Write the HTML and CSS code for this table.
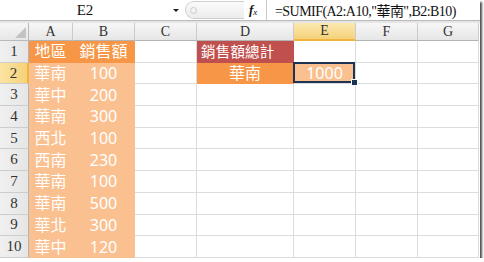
FILE: index.html
```html
<!DOCTYPE html>
<html lang="zh-Hant">
<head>
  <meta charset="UTF-8">
  <title>SUMIF</title>
  <link rel="stylesheet" href="styles.css">
</head>
<body>

  <div class="window">
    <!-- name box + formula bar -->
    <div class="formula-bar">
      <div class="name-box">E2</div>
      <span class="drop"></span>
      <span class="grip"><i></i></span>
      <span class="fx"><i>f</i><sub>x</sub></span>
      <div class="formula">=SUMIF(A2:A10,"華南",B2:B10)</div>
    </div>
    <div class="strip"></div>

    <div class="sheet">
      <div class="row head">
        <div class="corner"></div>
        <div class="col-h">A</div><div class="col-h">B</div><div class="col-h">C</div>
        <div class="col-h">D</div><div class="col-h active">E</div><div class="col-h">F</div><div class="col-h">G</div>
      </div>

      <div class="row">
        <div class="row-h">1</div>
        <div class="cell title">地區</div><div class="cell title">銷售額</div><div class="cell"></div>
        <div class="cell total">銷售額總計</div><div class="cell"></div><div class="cell"></div><div class="cell"></div>
      </div>
      <div class="row">
        <div class="row-h active">2</div>
        <div class="cell data">華南</div><div class="cell data">100</div><div class="cell"></div>
        <div class="cell title">華南</div><div class="cell data sel">1000</div><div class="cell"></div><div class="cell"></div>
      </div>
      <div class="row">
        <div class="row-h">3</div>
        <div class="cell data">華中</div><div class="cell data">200</div><div class="cell"></div>
        <div class="cell"></div><div class="cell"></div><div class="cell"></div><div class="cell"></div>
      </div>
      <div class="row">
        <div class="row-h">4</div>
        <div class="cell data">華南</div><div class="cell data">300</div><div class="cell"></div>
        <div class="cell"></div><div class="cell"></div><div class="cell"></div><div class="cell"></div>
      </div>
      <div class="row">
        <div class="row-h">5</div>
        <div class="cell data">西北</div><div class="cell data">100</div><div class="cell"></div>
        <div class="cell"></div><div class="cell"></div><div class="cell"></div><div class="cell"></div>
      </div>
      <div class="row">
        <div class="row-h">6</div>
        <div class="cell data">西南</div><div class="cell data">230</div><div class="cell"></div>
        <div class="cell"></div><div class="cell"></div><div class="cell"></div><div class="cell"></div>
      </div>
      <div class="row">
        <div class="row-h">7</div>
        <div class="cell data">華南</div><div class="cell data">100</div><div class="cell"></div>
        <div class="cell"></div><div class="cell"></div><div class="cell"></div><div class="cell"></div>
      </div>
      <div class="row">
        <div class="row-h">8</div>
        <div class="cell data">華南</div><div class="cell data">500</div><div class="cell"></div>
        <div class="cell"></div><div class="cell"></div><div class="cell"></div><div class="cell"></div>
      </div>
      <div class="row">
        <div class="row-h">9</div>
        <div class="cell data">華北</div><div class="cell data">300</div><div class="cell"></div>
        <div class="cell"></div><div class="cell"></div><div class="cell"></div><div class="cell"></div>
      </div>
      <div class="row">
        <div class="row-h">10</div>
        <div class="cell data">華中</div><div class="cell data">120</div><div class="cell"></div>
        <div class="cell"></div><div class="cell"></div><div class="cell"></div><div class="cell"></div>
      </div>
    </div>
  </div>

</body>
</html>
```

FILE: styles.css
```css
body {
  margin: 0;
  background: #fff;
}
.window {
  width: 480px;
  height: 258px;
  overflow: hidden;
  background: #fff;
  box-shadow: 2px 2px 2px rgba(0, 0, 0, 0.7);
}

/* formula bar */
.formula-bar {
  display: flex;
  align-items: center;
  height: 20px;
  border-bottom: 1px solid #b9b9b9;
  font-family: "Liberation Serif", "Noto Sans CJK TC", serif;
  color: #111;
}
.name-box {
  width: 170px;
  text-align: center;
  font-size: 15px;
}
.drop {
  width: 0;
  height: 0;
  margin-left: 3px;
  border-left: 3px solid transparent;
  border-right: 3px solid transparent;
  border-top: 3px solid #222;
}
.grip {
  display: flex;
  align-items: center;
  width: 58px;
  height: 16px;
  margin-left: 6px;
  border: 1px solid #cfcfcf;
  border-right: none;
  border-radius: 9px 0 0 9px;
  background: linear-gradient(#fbfbfb, #ececec);
}
.grip i {
  width: 5px;
  height: 5px;
  margin-left: 4px;
  border: 1px solid #c9c9c9;
  border-radius: 50%;
}
.fx {
  width: 17px;
  height: 20px;
  line-height: 20px;
  padding-left: 5px;
  border-right: 1px solid #c9c9c9;
  font-size: 13px;
}
.fx i {
  font-weight: bold;
}
.fx sub {
  font-size: 9px;
  font-style: italic;
  vertical-align: -1px;
}
.formula {
  padding-left: 8px;
  font-size: 14px;
  letter-spacing: -0.55px;
  white-space: nowrap;
}
.strip {
  height: 2px;
  background: #e6e6e6;
}

/* grid */
.row {
  display: grid;
  grid-template-columns: 29px 44px 62px 62px 97px 62px 62px 61px;
  height: 21.7px;
}
.row.head {
  height: 18px;
}
.row > div {
  box-sizing: border-box;
  display: flex;
  align-items: center;
  justify-content: center;
  line-height: 1;
  border-right: 1px solid #dadcdd;
  border-bottom: 1px solid #dadcdd;
}
.row .corner {
  position: relative;
  background: linear-gradient(#f6f6f6, #e7e7e7);
  border-right-color: #b9b9b9;
  border-bottom-color: #b9b9b9;
}
.corner::after {
  content: "";
  position: absolute;
  right: 2px;
  bottom: 2px;
  border-left: 11px solid transparent;
  border-bottom: 11px solid #c3c3c3;
}
.row .col-h {
  background: linear-gradient(#f7f7f7, #e6e6e6);
  border-right-color: #cbcbcb;
  border-bottom-color: #b4b4b4;
  font-family: "Liberation Serif", serif;
  font-size: 14px;
  color: #333;
}
.row .col-h.active {
  background: linear-gradient(#fbe9b0, #f5d27a);
  border-bottom: 2px solid #f2b43c;
}
.row .row-h {
  background: linear-gradient(90deg, #f0f0f0, #e6e6e6);
  border-right-color: #b4b4b4;
  border-bottom-color: #cdcdcd;
  font-family: "Liberation Serif", serif;
  font-size: 15px;
  color: #333;
}
.row .row-h.active {
  background: linear-gradient(90deg, #fbe4a2, #f5d27a);
  border-right: 2px solid #f2b43c;
}

/* cell text and fills */
.cell {
  font-family: "Noto Sans", "Noto Sans CJK TC", sans-serif;
  font-size: 16px;
  color: #fff;
}
.row .title {
  background: #f79646;
  border-color: #f79646;
}
.row .data {
  background: #fac090;
  border-color: #fac090;
}
.row .total {
  justify-content: flex-start;
  padding-left: 4px;
  background: #c0504d;
  border-color: #c0504d;
  font-size: 14.5px;
  letter-spacing: 0.2px;
  white-space: nowrap;
}
.row .sel {
  position: relative;
  border-right-color: #dadcdd;
  border-bottom-color: #dadcdd;
}
/* selection frame and fill handle */
.sel::before {
  content: "";
  position: absolute;
  left: -1px;
  top: -1px;
  right: 0;
  bottom: 0;
  border: 2px solid #1d3354;
}
.sel::after {
  content: "";
  position: absolute;
  right: -3px;
  bottom: -3px;
  width: 5px;
  height: 5px;
  background: #1d3354;
  border: 1px solid #fff;
}
```
